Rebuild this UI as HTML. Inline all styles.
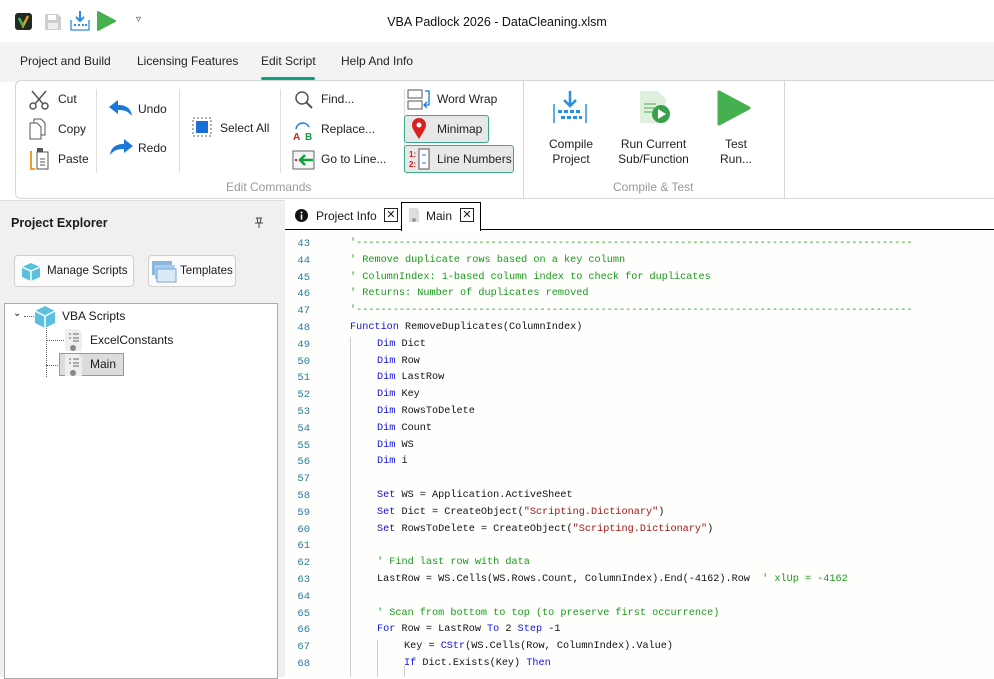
<!DOCTYPE html>
<html><head><meta charset="utf-8"><style>
*{margin:0;padding:0;box-sizing:border-box}
body{width:994px;height:677px;overflow:hidden;background:#fff;font-family:"Liberation Sans",sans-serif;font-size:12px;color:#1a1a1a;position:relative}
.abs{position:absolute}
.tb{top:0;left:0;width:994px;height:42px;background:#fff}
.tabs{top:42px;left:0;width:994px;height:40px;background:#f3f3f3}
.tab{position:absolute;top:12px;font-size:12px;color:#222}
.ribbon{top:80px;left:15px;width:979px;height:119px;background:#fff;border:1px solid #d6d6d6;border-right:none;border-radius:6px 0 0 6px}
.rl{position:absolute;font-size:12px;color:#222}
.sep{position:absolute;top:8px;width:1px;height:84px;background:#ddd}
.grp{position:absolute;font-size:12px;color:#999}
.tgl{position:absolute;border:1px solid #3aaa8a;background:#e8e8e8;border-radius:3px}
.left{top:200px;left:0;width:285px;height:477px;background:#f0f0f0;border-top:1px solid #ddd}
.btn{position:absolute;top:54px;height:32px;background:#fbfbfb;border:1px solid #d0d0d0;border-radius:4px;font-size:11.6px}
.tree{top:102px;left:4px;width:274px;height:376px;background:#fff;border:1px solid #aaa}
.edtabs{top:200px;left:285px;width:709px;height:30px;background:#fff;border-bottom:1.5px solid #000}
.code{top:235px;left:285px;width:709px;height:442px;background:#fefefd;font-family:"Liberation Mono",monospace;font-size:10.2px}
.ln{position:absolute;left:0;width:25px;text-align:right;color:#2f7a9c;font-size:10.5px}
.cl{position:absolute;left:65px;white-space:pre;color:#111}
.c{color:#1a9a1a}.k{color:#1010e0}.s{color:#a31515}
.guide{position:absolute;width:1px;background:#ccc}
</style></head><body>
<div class="abs tb">
 <svg class="abs" style="left:15px;top:13px" width="17" height="17"><rect width="17" height="17" rx="3" fill="#1d2a25"/><path d="M4 5l4 8 5-10" stroke="#e0a020" stroke-width="2.5" fill="none"/><path d="M4 5l4 8" stroke="#3cb060" stroke-width="2.5"/></svg>
 <svg class="abs" style="left:44px;top:13px" width="18" height="18"><path d="M1 1h13l3 3v13H1z" fill="#cfcfcf"/><rect x="4" y="2" width="8" height="5" fill="#fff"/><rect x="4" y="10" width="10" height="6" fill="#eee"/></svg>
 <svg class="abs" style="left:69px;top:10px" width="22" height="22"><path d="M11 1v10M7 7l4 4 4-4" stroke="#2a8ee0" stroke-width="2" fill="none"/><path d="M2 10v10h18V10" stroke="#2a8ee0" stroke-width="1.3" fill="none"/><g fill="#2a8ee0"><rect x="5" y="14" width="2" height="2"/><rect x="9" y="14" width="2" height="2"/><rect x="13" y="14" width="2" height="2"/><rect x="16" y="14" width="2" height="2"/></g></svg>
 <svg class="abs" style="left:97px;top:10px" width="20" height="22"><path d="M1 2l17 9-17 9z" fill="#45b050" stroke="#45b050" stroke-linejoin="round" stroke-width="2"/></svg>
 <div class="abs" style="left:136px;top:14px;font-size:10px;color:#444">&#x25BF;</div>
 <div class="abs" style="left:0;width:994px;top:15px;text-align:center;font-size:12.5px;color:#111">VBA Padlock 2026 - DataCleaning.xlsm</div>
</div>
<div class="abs tabs">
 <div class="tab" style="left:20px">Project and Build</div>
 <div class="tab" style="left:137px">Licensing Features</div>
 <div class="tab" style="left:261px">Edit Script</div>
 <div class="abs" style="left:261px;top:35px;width:54px;height:3px;background:#10a080;border-radius:2px"></div>
 <div class="tab" style="left:341px">Help And Info</div>
</div>
<div class="abs ribbon">
 <svg class="abs" style="left:12px;top:8px" width="22" height="22"><circle cx="5" cy="17" r="3" stroke="#555" stroke-width="1.5" fill="none"/><circle cx="17" cy="17" r="3" stroke="#555" stroke-width="1.5" fill="none"/><path d="M7 15L18 2M15 15L4 2" stroke="#555" stroke-width="1.5"/></svg>
 <div class="rl" style="left:42px;top:11px">Cut</div>
 <svg class="abs" style="left:12px;top:37px" width="20" height="22"><path d="M6 1h7l4 4v12H6z" fill="#fff" stroke="#555"/><path d="M2 5h7l4 4v12H2z" fill="#fff" stroke="#555"/></svg>
 <div class="rl" style="left:42px;top:41px">Copy</div>
 <svg class="abs" style="left:13px;top:66px" width="22" height="24"><path d="M2 4v18h4" stroke="#f0a020" stroke-width="2" fill="none"/><rect x="8" y="5" width="11" height="17" fill="#fff" stroke="#555"/><rect x="8" y="1" width="6" height="4" fill="#555"/><path d="M11 12h5M11 15h5M11 18h5" stroke="#555"/></svg>
 <div class="rl" style="left:42px;top:71px">Paste</div>
 <div class="sep" style="left:80px"></div>
 <svg class="abs" style="left:92px;top:17px" width="26" height="20"><path d="M10 2L1 9l9 7v-4c6 0 10 1 14 6-1-7-5-11-14-11z" fill="#1a78d8"/></svg>
 <div class="rl" style="left:122px;top:21px">Undo</div>
 <svg class="abs" style="left:92px;top:56px" width="26" height="20"><path d="M16 2l9 7-9 7v-4c-6 0-10 1-14 6 1-7 5-11 14-11z" fill="#1a78d8"/></svg>
 <div class="rl" style="left:122px;top:60px">Redo</div>
 <div class="sep" style="left:163px"></div>
 <svg class="abs" style="left:176px;top:36px" width="20" height="20"><rect x="1" y="1" width="18" height="18" fill="none" stroke="#666" stroke-dasharray="2 2"/><rect x="4" y="4" width="12" height="12" fill="#1a70d8"/></svg>
 <div class="rl" style="left:204px;top:40px">Select All</div>
 <div class="sep" style="left:264px"></div>
 <svg class="abs" style="left:278px;top:9px" width="20" height="20"><circle cx="8" cy="8" r="6" fill="none" stroke="#555" stroke-width="1.5"/><path d="M12 12l6 6" stroke="#555" stroke-width="2"/></svg>
 <div class="rl" style="left:305px;top:11px">Find...</div>
 <svg class="abs" style="left:276px;top:38px" width="24" height="22"><path d="M4 10C5 3 14 2 17 8" stroke="#1a78d8" stroke-width="1.5" fill="none"/><text x="1" y="21" font-size="10" font-weight="bold" fill="#d02020" font-family="Liberation Sans">A</text><text x="13" y="21" font-size="10" font-weight="bold" fill="#10a040" font-family="Liberation Sans">B</text></svg>
 <div class="rl" style="left:305px;top:41px">Replace...</div>
 <svg class="abs" style="left:276px;top:69px" width="24" height="20"><rect x="1" y="1" width="21" height="18" fill="#f4f4f4" stroke="#666"/><path d="M21 10H9M13 5l-5 5 5 5" stroke="#10a040" stroke-width="2.5" fill="none"/><rect x="3" y="9" width="2" height="2" fill="#d02020"/></svg>
 <div class="rl" style="left:305px;top:71px">Go to Line...</div>
 <div class="sep" style="left:388px"></div>
 <svg class="abs" style="left:391px;top:8px" width="26" height="22"><rect x="1" y="1" width="14" height="8" fill="none" stroke="#555"/><rect x="1" y="12" width="14" height="8" fill="none" stroke="#555"/><path d="M18 2h4v14h-4M20 13l-3 3 3 3" stroke="#1a78d8" stroke-width="1.3" fill="none"/></svg>
 <div class="rl" style="left:421px;top:11px">Word Wrap</div>
 <div class="tgl" style="left:388px;top:34px;width:85px;height:28px"></div>
 <svg class="abs" style="left:395px;top:37px" width="16" height="22"><path d="M8 21C3 13 1 10 1 7a7 7 0 0114 0c0 3-2 6-7 14z" fill="#d82020"/><circle cx="8" cy="7" r="2.5" fill="#fff"/></svg>
 <div class="rl" style="left:421px;top:41px">Minimap</div>
 <div class="tgl" style="left:388px;top:64px;width:110px;height:28px"></div>
 <svg class="abs" style="left:393px;top:67px" width="22" height="22"><text x="0" y="9" font-size="8" font-weight="bold" fill="#d02020" font-family="Liberation Sans">1:</text><text x="0" y="19" font-size="8" font-weight="bold" fill="#d02020" font-family="Liberation Sans">2:</text><rect x="10" y="1" width="10" height="20" fill="#fff" stroke="#555"/><path d="M13 7h4M13 15h4" stroke="#1a78d8"/></svg>
 <div class="rl" style="left:421px;top:71px">Line Numbers</div>
 <div class="grp" style="left:210px;top:99px">Edit Commands</div>
 <div class="sep" style="left:507px;top:0;height:118px;background:#d6d6d6"></div>
 <svg class="abs" style="left:536px;top:9px" width="36" height="36"><path d="M18 1v14M12 10l6 6 6-6" stroke="#2a8ee0" stroke-width="2.5" fill="none"/><path d="M2 14v19M34 14v19" stroke="#2a8ee0" stroke-width="1.5"/><g fill="#2a8ee0"><rect x="6" y="20" width="4" height="3"/><rect x="12" y="20" width="4" height="3"/><rect x="18" y="20" width="4" height="3"/><rect x="24" y="20" width="4" height="3"/><rect x="9" y="26" width="4" height="3"/><rect x="15" y="26" width="4" height="3"/><rect x="21" y="26" width="4" height="3"/><rect x="27" y="26" width="3" height="3"/></g></svg>
 <div class="rl" style="left:518px;top:56px;width:74px;text-align:center;line-height:15px">Compile<br>Project</div>
 <svg class="abs" style="left:622px;top:9px" width="34" height="36"><path d="M2 1h18l8 8v24H2z" fill="#dff0df"/><path d="M6 14h12M6 18h10M6 22h8" stroke="#7cc27c" stroke-width="1.5"/><circle cx="23" cy="24" r="9" fill="#3aa04a"/><path d="M20 19l8 5-8 5z" fill="#fff"/></svg>
 <div class="rl" style="left:595px;top:56px;width:85px;text-align:center;line-height:15px">Run Current<br>Sub/Function</div>
 <svg class="abs" style="left:700px;top:9px" width="36" height="36"><path d="M3 2l30 16-30 16z" fill="#45b050" stroke="#45b050" stroke-width="3" stroke-linejoin="round"/></svg>
 <div class="rl" style="left:690px;top:56px;width:60px;text-align:center;line-height:15px">Test<br>Run...</div>
 <div class="grp" style="left:597px;top:99px">Compile &amp; Test</div>
 <div class="sep" style="left:768px;top:0;height:118px;background:#d6d6d6"></div>
</div>
<div class="abs left">
 <div class="abs" style="left:11px;top:15px;font-weight:bold;font-size:12.5px">Project Explorer</div>
 <svg class="abs" style="left:254px;top:16px" width="10" height="12"><path d="M2 1h6M3 1l1 5h2l1-5M1 6h8M5 6v5" stroke="#444" fill="none"/></svg>
 <div class="btn" style="left:14px;width:120px"><svg class="abs" style="left:6px;top:6px" width="20" height="20"><path d="M10 1l9 4v10l-9 4-9-4V5z" fill="#5bc0e0"/><path d="M10 9v10M1 5l9 4 9-4" stroke="#fff" stroke-width="1.5" fill="none"/></svg><span class="abs" style="left:32px;top:8px">Manage Scripts</span></div>
 <div class="btn" style="left:148px;width:88px"><svg class="abs" style="left:2px;top:4px" width="26" height="24"><rect x="1" y="1" width="20" height="14" fill="#8ab6e0"/><rect x="4" y="5" width="20" height="14" fill="#aaccee"/><rect x="6" y="9" width="19" height="13" fill="#dbe9f8" stroke="#7aa6d8"/></svg><span class="abs" style="left:31px;top:8px">Templates</span></div>
 <div class="abs tree">
  <div class="abs" style="left:8px;top:4px;font-size:10px">&#x2304;</div>
  <div class="abs" style="left:19px;top:12px;width:10px;border-top:1px dotted #666"></div>
  <svg class="abs" style="left:29px;top:1px" width="22" height="24"><path d="M11 1l10 5v12l-10 5-10-5V6z" fill="#5bc0e0"/><path d="M11 11v12M1 6l10 5 10-5" stroke="#fff" stroke-width="1.5" fill="none"/></svg>
  <div class="abs" style="left:57px;top:5px">VBA Scripts</div>
  <div class="abs" style="left:41px;top:24px;height:49px;border-left:1px dotted #666"></div>
  <div class="abs" style="left:41px;top:36px;width:18px;border-top:1px dotted #666"></div>
  <div class="abs" style="left:41px;top:61px;width:18px;border-top:1px dotted #666"></div>
  <svg class="abs" style="left:59px;top:24px" width="20" height="24"><path d="M1 1h13l4 4v18H1z" fill="#eee"/><path d="M5 6h2M9 6h6M5 10h2M9 10h6M9 13h6" stroke="#666"/><circle cx="9" cy="20" r="3" fill="#888"/></svg>
  <div class="abs" style="left:85px;top:29px">ExcelConstants</div>
  <div class="abs" style="left:54px;top:49px;width:65px;height:23px;background:#dcdcdc;border:1px solid #999"></div>
  <svg class="abs" style="left:59px;top:49px" width="20" height="24"><path d="M1 1h13l4 4v18H1z" fill="#eee"/><path d="M5 6h2M9 6h6M5 10h2M9 10h6M9 13h6" stroke="#666"/><circle cx="9" cy="20" r="3" fill="#888"/></svg>
  <div class="abs" style="left:85px;top:53px">Main</div>
 </div>
</div>
<div class="abs edtabs">
 <svg class="abs" style="left:10px;top:9px" width="13" height="13"><circle cx="6.5" cy="6.5" r="6.5" fill="#111"/><rect x="5.7" y="5.5" width="1.6" height="5" fill="#fff"/><circle cx="6.5" cy="3.5" r="1" fill="#fff"/></svg>
 <div class="abs" style="left:31px;top:9px;font-size:12px">Project Info</div>
 <div class="abs" style="left:99px;top:8px;width:14px;height:14px;border:1px solid #222;font-size:11px;line-height:12px;text-align:center">&#x2715;</div>
 <div class="abs" style="left:116px;top:2px;width:80px;height:29px;border:1.5px solid #000;border-bottom:none;background:#fff"></div>
 <svg class="abs" style="left:123px;top:7px" width="12" height="16"><path d="M1 1h8l2 2v12H1z" fill="#ddd"/><circle cx="6" cy="13" r="2" fill="#999"/></svg>
 <div class="abs" style="left:141px;top:9px;font-size:12px">Main</div>
 <div class="abs" style="left:175px;top:8px;width:14px;height:14px;border:1px solid #222;font-size:11px;line-height:12px;text-align:center">&#x2715;</div>
</div>
<div class="abs code">
 <div class="guide" style="left:65px;top:102px;height:340px"></div>
 <div class="guide" style="left:92px;top:405px;height:37px"></div>
 <div class="guide" style="left:119px;top:430px;height:12px"></div>
 <div id="lines"></div>
</div>
<script>
var L=[
[0,'<span class="c">\'-------------------------------------------------------------------------------------------</span>'],
[0,'<span class="c">\' Remove duplicate rows based on a key column</span>'],
[0,'<span class="c">\' ColumnIndex: 1-based column index to check for duplicates</span>'],
[0,'<span class="c">\' Returns: Number of duplicates removed</span>'],
[0,'<span class="c">\'-------------------------------------------------------------------------------------------</span>'],
[0,'<span class="k">Function</span> RemoveDuplicates(ColumnIndex)'],
[1,'<span class="k">Dim</span> Dict'],[1,'<span class="k">Dim</span> Row'],[1,'<span class="k">Dim</span> LastRow'],[1,'<span class="k">Dim</span> Key'],
[1,'<span class="k">Dim</span> RowsToDelete'],[1,'<span class="k">Dim</span> Count'],[1,'<span class="k">Dim</span> WS'],[1,'<span class="k">Dim</span> i'],
[1,''],
[1,'<span class="k">Set</span> WS = Application.ActiveSheet'],
[1,'<span class="k">Set</span> Dict = CreateObject(<span class="s">"Scripting.Dictionary"</span>)'],
[1,'<span class="k">Set</span> RowsToDelete = CreateObject(<span class="s">"Scripting.Dictionary"</span>)'],
[1,''],
[1,'<span class="c">\' Find last row with data</span>'],
[1,'LastRow = WS.Cells(WS.Rows.Count, ColumnIndex).End(-4162).Row  <span class="c">\' xlUp = -4162</span>'],
[1,''],
[1,'<span class="c">\' Scan from bottom to top (to preserve first occurrence)</span>'],
[1,'<span class="k">For</span> Row = LastRow <span class="k">To</span> 2 <span class="k">Step</span> -1'],
[2,'Key = <span class="k">CStr</span>(WS.Cells(Row, ColumnIndex).Value)'],
[2,'<span class="k">If</span> Dict.Exists(Key) <span class="k">Then</span>']
];
var h='';
for(var i=0;i<L.length;i++){var y=3+i*16.8;
h+='<div class="ln" style="top:'+y+'px">'+(43+i)+'</div><div class="cl" style="top:'+y+'px;left:'+(65+L[i][0]*27)+'px">'+L[i][1]+'</div>';}
document.getElementById('lines').innerHTML=h;
</script>
</body></html>
